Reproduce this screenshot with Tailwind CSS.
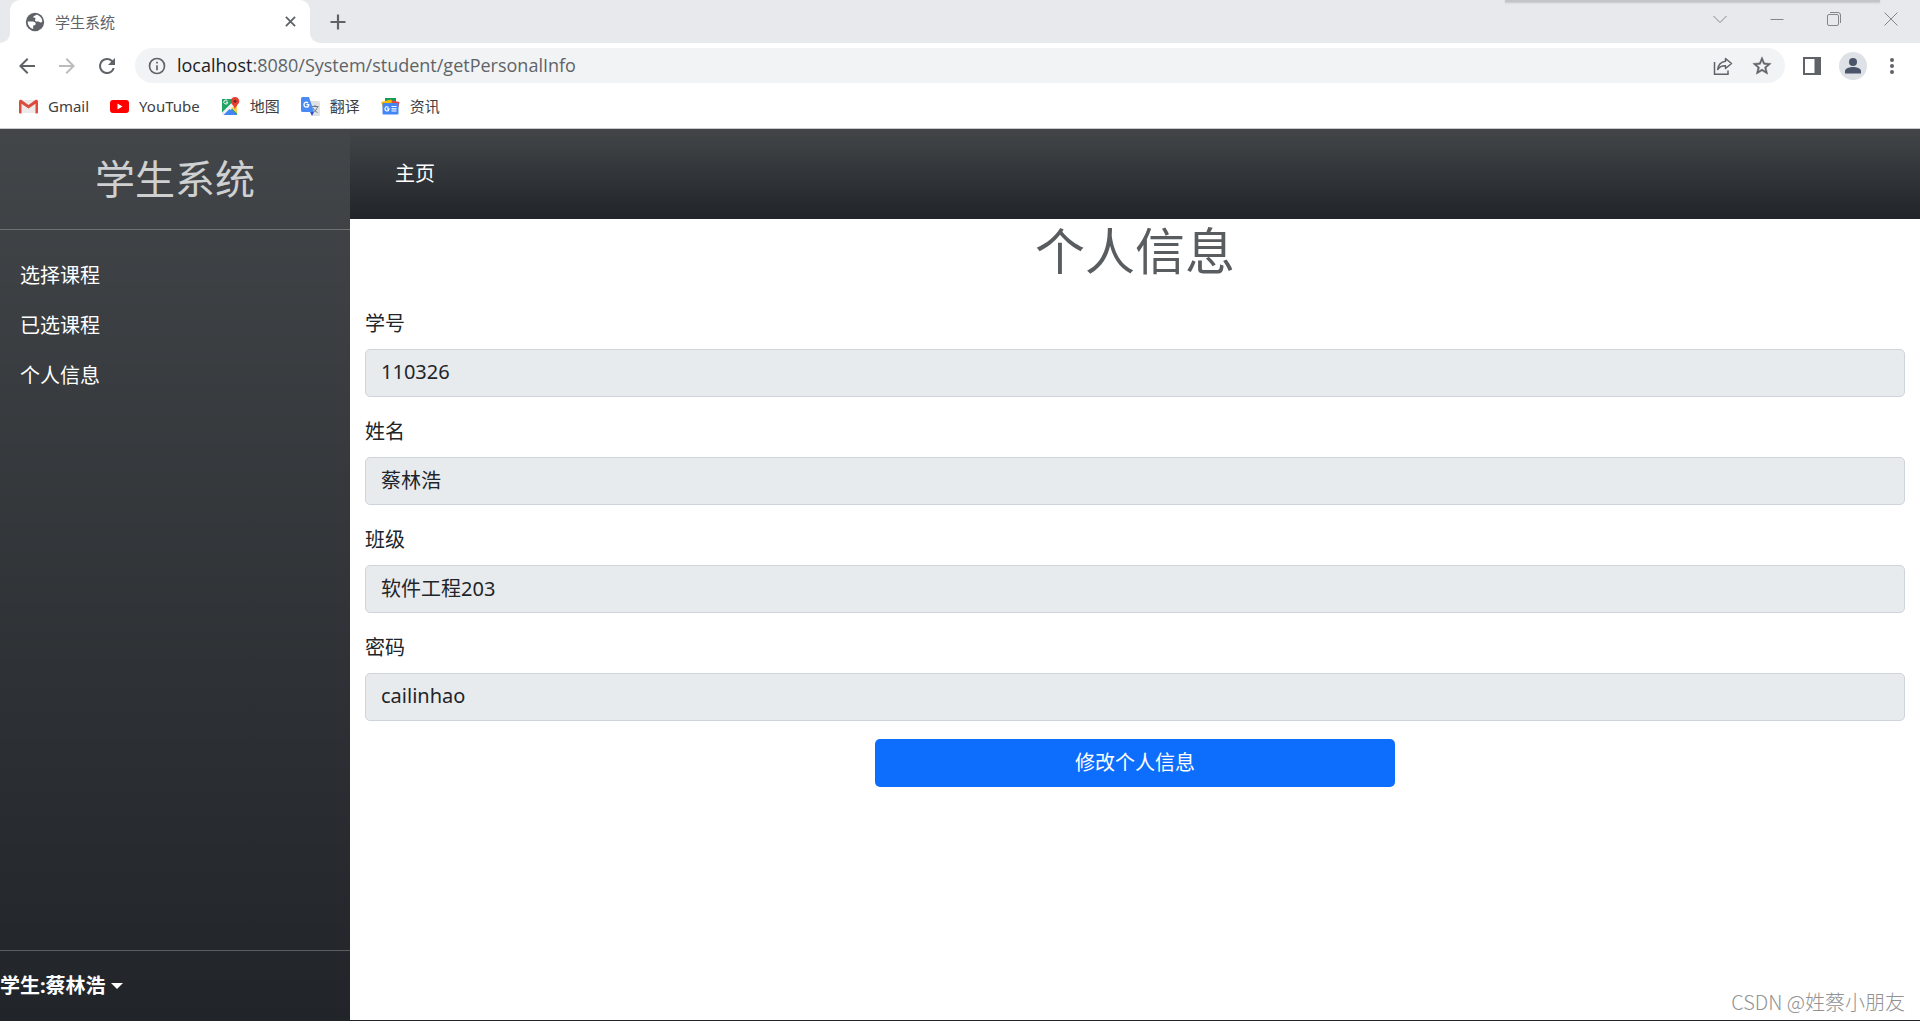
<!DOCTYPE html>
<html lang="zh-CN">
<head>
<meta charset="utf-8">
<meta name="viewport" content="width=device-width, initial-scale=1">
<title>学生系统</title>
<script src="https://cdn.jsdelivr.net/npm/@tailwindcss/browser@4"></script>
</head>
<body class="relative flex min-h-screen flex-col border-b border-[#212529] bg-white font-['Noto_Sans','Noto_Sans_CJK_SC',sans-serif] text-xl text-[#212529]">

<!-- Browser window -->
<header class="border-b border-[#c9c9cd] text-[15px] leading-5">
  <div class="flex h-[43px] items-stretch bg-[#e8e9ed] pl-[10px]">
    <div class="relative flex w-[300px] items-center rounded-t-[10px] bg-white pr-[10px] pl-[14px]">
      <svg class="absolute bottom-0 -left-[10px] size-[10px]" viewBox="0 0 10 10" fill="#fff"><path d="M10 0v10H0A10 10 0 0 0 10 0z"/></svg>
      <svg class="absolute -right-[10px] bottom-0 size-[10px]" viewBox="0 0 10 10" fill="#fff"><path d="M0 0v10h10A10 10 0 0 1 0 0z"/></svg>
      <svg class="size-[22px]" viewBox="0 0 24 24"><circle cx="12" cy="12" r="10" fill="#5f6368"/><path d="M13.500 4.200c3.500.6 6.200 3.400 6.500 7-.8 1.600-2.400 1.600-3.200.8-.9-.9-2-.4-3.200-.6-1.600-.3-2-1.700-1.200-2.800.5-.9-.2-1.500-1.100-1.300-1.400.2-1.600-1-.6-1.600.9-.5 2.200-.8 2.800-1.500zM4 11.500h5.500c1.800 0 3.300 1.100 3.300 2.500 0 1.200-1.300 1.700-2.300 1.900-.8.200-.5 1.600-.5 2.600v1.200C6.500 18.800 4 15.600 4 11.500z" fill="#fff"/></svg>
      <span class="ml-[9px] flex-1 text-[#5f6368]">学生系统</span>
      <button class="flex size-5 items-center justify-center" aria-label="关闭标签页"><svg class="size-[11px]" viewBox="0 0 12 12" stroke="#5f6368" stroke-width="2"><path d="M1 1l10 10M11 1L1 11"/></svg></button>
    </div>
    <button class="ml-[18px] flex w-5 items-center justify-center" aria-label="新标签页"><svg class="size-4" viewBox="0 0 16 16" stroke="#5f6368" stroke-width="2.200"><path d="M8 .5v15M.5 8h15"/></svg></button>
    <div class="ml-auto flex h-[37px] items-center text-[#85868a]">
      <button class="flex w-[57px] justify-center" aria-label="搜索标签页"><svg class="size-[14px]" viewBox="0 0 14 14" fill="none" stroke="currentColor"><path d="M.5 4L7 10.500 13.500 4"/></svg></button>
      <button class="flex w-[57px] justify-center" aria-label="最小化"><svg class="size-[14px]" viewBox="0 0 14 14" stroke="currentColor"><path d="M.5 7.500h13"/></svg></button>
      <button class="flex w-[57px] justify-center" aria-label="还原"><svg class="size-[14px]" viewBox="0 0 14 14" fill="none" stroke="currentColor"><rect x=".5" y="2.500" width="11" height="11" rx="1.500"/><path d="M3 .5h8a2.500 2.500 0 0 1 2.500 2.500v8"/></svg></button>
      <button class="flex w-[58px] justify-center" aria-label="关闭"><svg class="size-[14px]" viewBox="0 0 14 14" stroke="currentColor"><path d="M.5.5l13 13M13.500.5l-13 13"/></svg></button>
    </div>
  </div>

  <div class="flex h-[45px] items-center gap-4 pr-4 pl-[15px]">
    <button aria-label="后退"><svg class="size-6" viewBox="0 0 24 24" fill="#5f6368"><path d="M20 11H7.830l5.590-5.590L12 4l-8 8 8 8 1.410-1.410L7.830 13H20v-2z"/></svg></button>
    <button aria-label="前进"><svg class="size-6" viewBox="0 0 24 24" fill="#babcbe"><path d="M12 4l-1.410 1.410L16.170 11H4v2h12.170l-5.580 5.590L12 20l8-8z"/></svg></button>
    <button aria-label="重新加载"><svg class="size-6" viewBox="0 0 24 24" fill="#5f6368"><path d="M17.650 6.350A7.958 7.958 0 0 0 12 4a8 8 0 1 0 7.730 10h-2.080A5.990 5.990 0 0 1 12 18a6 6 0 1 1 0-12c1.660 0 3.140.690 4.220 1.780L13 11h7V4l-2.350 2.350z"/></svg></button>
    <div class="flex h-[35px] flex-1 items-center rounded-full bg-[#f1f3f4] pr-3 pl-3">
      <svg class="size-5" viewBox="0 0 24 24" fill="#5f6368"><path d="M11 7h2v2h-2zm0 4h2v6h-2zm1-9a10 10 0 1 0 0 20 10 10 0 0 0 0-20zm0 18a8 8 0 1 1 0-16 8 8 0 0 1 0 16z"/></svg>
      <div role="textbox" contenteditable="true" spellcheck="false" aria-label="地址" class="ml-[10px] flex-1 pb-[2px] font-['Open_Sans',sans-serif] text-lg leading-6 text-[#5f6368]"><span class="text-[#202124]">localhost</span>:8080/System/student/getPersonalInfo</div>
      <button aria-label="分享"><svg class="size-5" viewBox="0 0 20 20" fill="none" stroke="#5f6368" stroke-width="1.500"><path d="M1.500 6v12.300h13.500V14.500"/><path d="M12.500 2.500l6 5-6 5V9.800c-3.500-.2-6 1-7.800 3.700.5-4.300 3-7.500 7.800-8.200z" stroke-linejoin="round"/></svg></button>
      <button class="ml-[18px]" aria-label="添加书签"><svg class="size-[22px]" viewBox="0 0 24 24" fill="#5f6368" stroke="#5f6368" stroke-width=".5"><path d="M22 9.240l-7.190-.62L12 2 9.190 8.630 2 9.240l5.460 4.730L5.820 21 12 17.270 18.180 21l-1.630-7.030L22 9.240zM12 15.400l-3.760 2.270 1-4.280-3.320-2.880 4.380-.38L12 6.100l1.710 4.040 4.380.38-3.320 2.880 1 4.280L12 15.400z"/></svg></button>
    </div>
    <div class="flex items-center">
      <button class="ml-[2px]" aria-label="侧边栏"><svg class="size-[18px]" viewBox="0 0 18 18"><path d="M0 0h18v18H0z" fill="#5f6368"/><path d="M2 2h9.500v14H2z" fill="#fff"/></svg></button>
      <button class="ml-[18px]" aria-label="个人资料"><svg class="size-7" viewBox="0 0 28 28"><circle cx="14" cy="14" r="14" fill="#dee1e6"/><g fill="#4a5569"><circle cx="14" cy="10" r="4"/><path d="M6 21.500V19c0-2.600 5-4 8-4s8 1.400 8 4v2.500z"/></g></svg></button>
      <button class="ml-[13px]" aria-label="菜单"><svg class="size-6" viewBox="0 0 24 24" fill="#5f6368"><circle cx="12" cy="6" r="2"/><circle cx="12" cy="12" r="2"/><circle cx="12" cy="18" r="2"/></svg></button>
    </div>
  </div>

  <nav class="flex h-10 items-center gap-[21px] pb-1 pl-[19px] text-[#3c4043]" aria-label="书签">
    <a href="#" class="flex items-center gap-[10px]"><svg class="size-[19px]" viewBox="0 0 19 19"><path d="M2 3h15v13H2z" fill="#eceaea"/><path d="M0 4.500C0 2.800 1.800 2.200 3 3.200L9.500 8 16 3.200c1.200-1 3-.4 3 1.300V15.500a1 1 0 0 1-1 1h-1.500V6.700L9.500 11.500 2.500 6.700v9.800H1a1 1 0 0 1-1-1z" fill="#dd4b3e"/></svg>Gmail</a>
    <a href="#" class="flex items-center gap-[10px]"><svg class="size-[19px]" viewBox="0 0 19 19"><rect y="3" width="19" height="13" rx="3" fill="#f00"/><path d="M7.500 6.500v6l5-3z" fill="#fff"/></svg>YouTube</a>
    <a href="#" class="flex items-center gap-[10px]"><svg class="size-[19px]" viewBox="0 0 19 19"><path d="M1 2h15v16H1z" fill="#1fa463"/><path d="M1 17.500L8.500 10l7.500 8H1.500z" fill="#4285f4"/><path d="M1 15.500L13.500 3 16 5.500v2L3.500 18H1z" fill="#f2f2f2"/><path d="M2.500 18l6-6 6 6z" fill="#4285f4"/><path d="M10 10.500l6 6V9z" fill="#ffd04c"/><path d="M6.800 5.200H4.800M6.500 3.900a2 2 0 1 0 .3 1.600" fill="none" stroke="#fff"/><path d="M14 0a4.300 4.300 0 0 0-4.300 4.300C9.700 7.300 13 8 14 12.500c1-4.500 4.300-5.200 4.300-8.200A4.300 4.300 0 0 0 14 0z" fill="#e44134"/><circle cx="14" cy="4.300" r="1.500" fill="#7b231e"/></svg>地图</a>
    <a href="#" class="flex items-center gap-[10px]"><svg class="size-[19px]" viewBox="0 0 19 19"><path d="M7 4h10.500A1.500 1.500 0 0 1 19 5.500v12a1.500 1.500 0 0 1-1.500 1.500H11z" fill="#dfe1e4"/><path d="M10.500 9.500h7M14 8v1.500M16.500 9.500c-.5 3-2.500 4.500-4 5.500M12 11c1 2 2.500 3.500 4.500 4.500" fill="none" stroke="#687a86"/><path d="M9 15h4l-2 4z" fill="#2b51c9"/><path d="M1.500 0H8l5 15H1.500A1.500 1.500 0 0 1 0 13.500v-12A1.500 1.500 0 0 1 1.500 0z" fill="#4a8af4"/><path d="M5.500 7.700h2.300c0 3.300-4.800 3.300-4.800 0 0-2.400 2.700-3.200 4.100-1.600" fill="none" stroke="#fff" stroke-width="1.300"/></svg>翻译</a>
    <a href="#" class="flex items-center gap-[10px]"><svg class="size-[19px]" viewBox="0 0 19 19"><path d="M4 1h11v6H4z" fill="#159a57"/><path d="M0 5l10-2.500 3 5-11 3z" fill="#fbbc04"/><path d="M11 3.500l7.500 1.500-1 5H10z" fill="#e8453c"/><rect x="1.500" y="6" width="16" height="11.500" rx="1" fill="#4285f4"/><path d="M6 11.800h2c0 3-4 2.800-4 0 0-2 2.200-2.700 3.500-1.300M10.500 9.500h5M10.500 11.800h5M10.500 14h5" fill="none" stroke="#fff" stroke-width="1.200"/></svg>资讯</a>
  </nav>
  <!-- Edge of the window lying above -->
  <div class="absolute top-0 right-[40px] h-[2px] w-[375px] bg-[#c3c4c7] shadow-[0_1px_2px_#c3c4c7]"></div>
</header>

<!-- Student system -->
<div class="flex flex-1">
  <aside class="flex w-[350px] shrink-0 flex-col bg-[#212529] bg-linear-to-b from-white/15 to-white/0 text-white">
    <a href="#" class="flex h-[101px] items-center justify-center border-b border-white/25 text-[40px] leading-[50px] text-white/75">学生系统</a>
    <nav class="flex flex-1 flex-col pt-[21px]">
      <a href="#" class="px-5 py-[10px] leading-[30px]">选择课程</a>
      <a href="#" class="px-5 py-[10px] leading-[30px]">已选课程</a>
      <a href="#" class="px-5 py-[10px] leading-[30px]">个人信息</a>
    </nav>
    <button class="flex h-[70px] items-center border-t border-white/25 font-bold">学生:蔡林浩
      <svg class="ml-[5px] h-[6px] w-3" viewBox="0 0 12 6" fill="currentColor"><path d="M0 0h12L6 6z"/></svg>
    </button>
  </aside>

  <div class="min-w-0 flex-1">
    <nav class="flex h-[90px] items-center bg-[#212529] bg-linear-to-b from-white/15 to-white/0 px-[45px] text-white"><a href="#">主页</a></nav>
    <main class="px-[5px]">
      <h1 class="pt-[2px] text-center text-[50px] leading-[60px] text-[#5a5d60]">个人信息</h1>
      <form class="mt-7">
        <div class="mb-5 px-[10px]"><label for="sid" class="mb-[10px] block leading-[30px]">学号</label><input id="sid" readonly value="110326" class="block h-12 w-full rounded-[5px] border border-[#ced4da] bg-[#e8ebee] px-[15px] pb-[3px]"></div>
        <div class="mb-5 px-[10px]"><label for="name" class="mb-[10px] block leading-[30px]">姓名</label><input id="name" readonly value="蔡林浩" class="block h-12 w-full rounded-[5px] border border-[#ced4da] bg-[#e8ebee] px-[15px] pb-[3px]"></div>
        <div class="mb-5 px-[10px]"><label for="class" class="mb-[10px] block leading-[30px]">班级</label><input id="class" readonly value="软件工程203" class="block h-12 w-full rounded-[5px] border border-[#ced4da] bg-[#e8ebee] px-[15px] pb-[3px]"></div>
        <div class="px-[10px]"><label for="pwd" class="mb-[10px] block leading-[30px]">密码</label><input id="pwd" readonly value="cailinhao" class="block h-12 w-full rounded-[5px] border border-[#ced4da] bg-[#e8ebee] px-[15px] pb-[3px]"></div>
        <button type="button" class="mx-auto mt-[18px] block h-12 w-1/3 rounded-[5px] bg-[#0d6efd] text-white">修改个人信息</button>
      </form>
    </main>
  </div>
</div>
<div class="absolute right-[15px] bottom-1 font-['Noto_Sans_CJK_SC',sans-serif] text-[20px] leading-7 font-light text-[#929292]">CSDN @姓蔡小朋友</div>
</body>
</html>
